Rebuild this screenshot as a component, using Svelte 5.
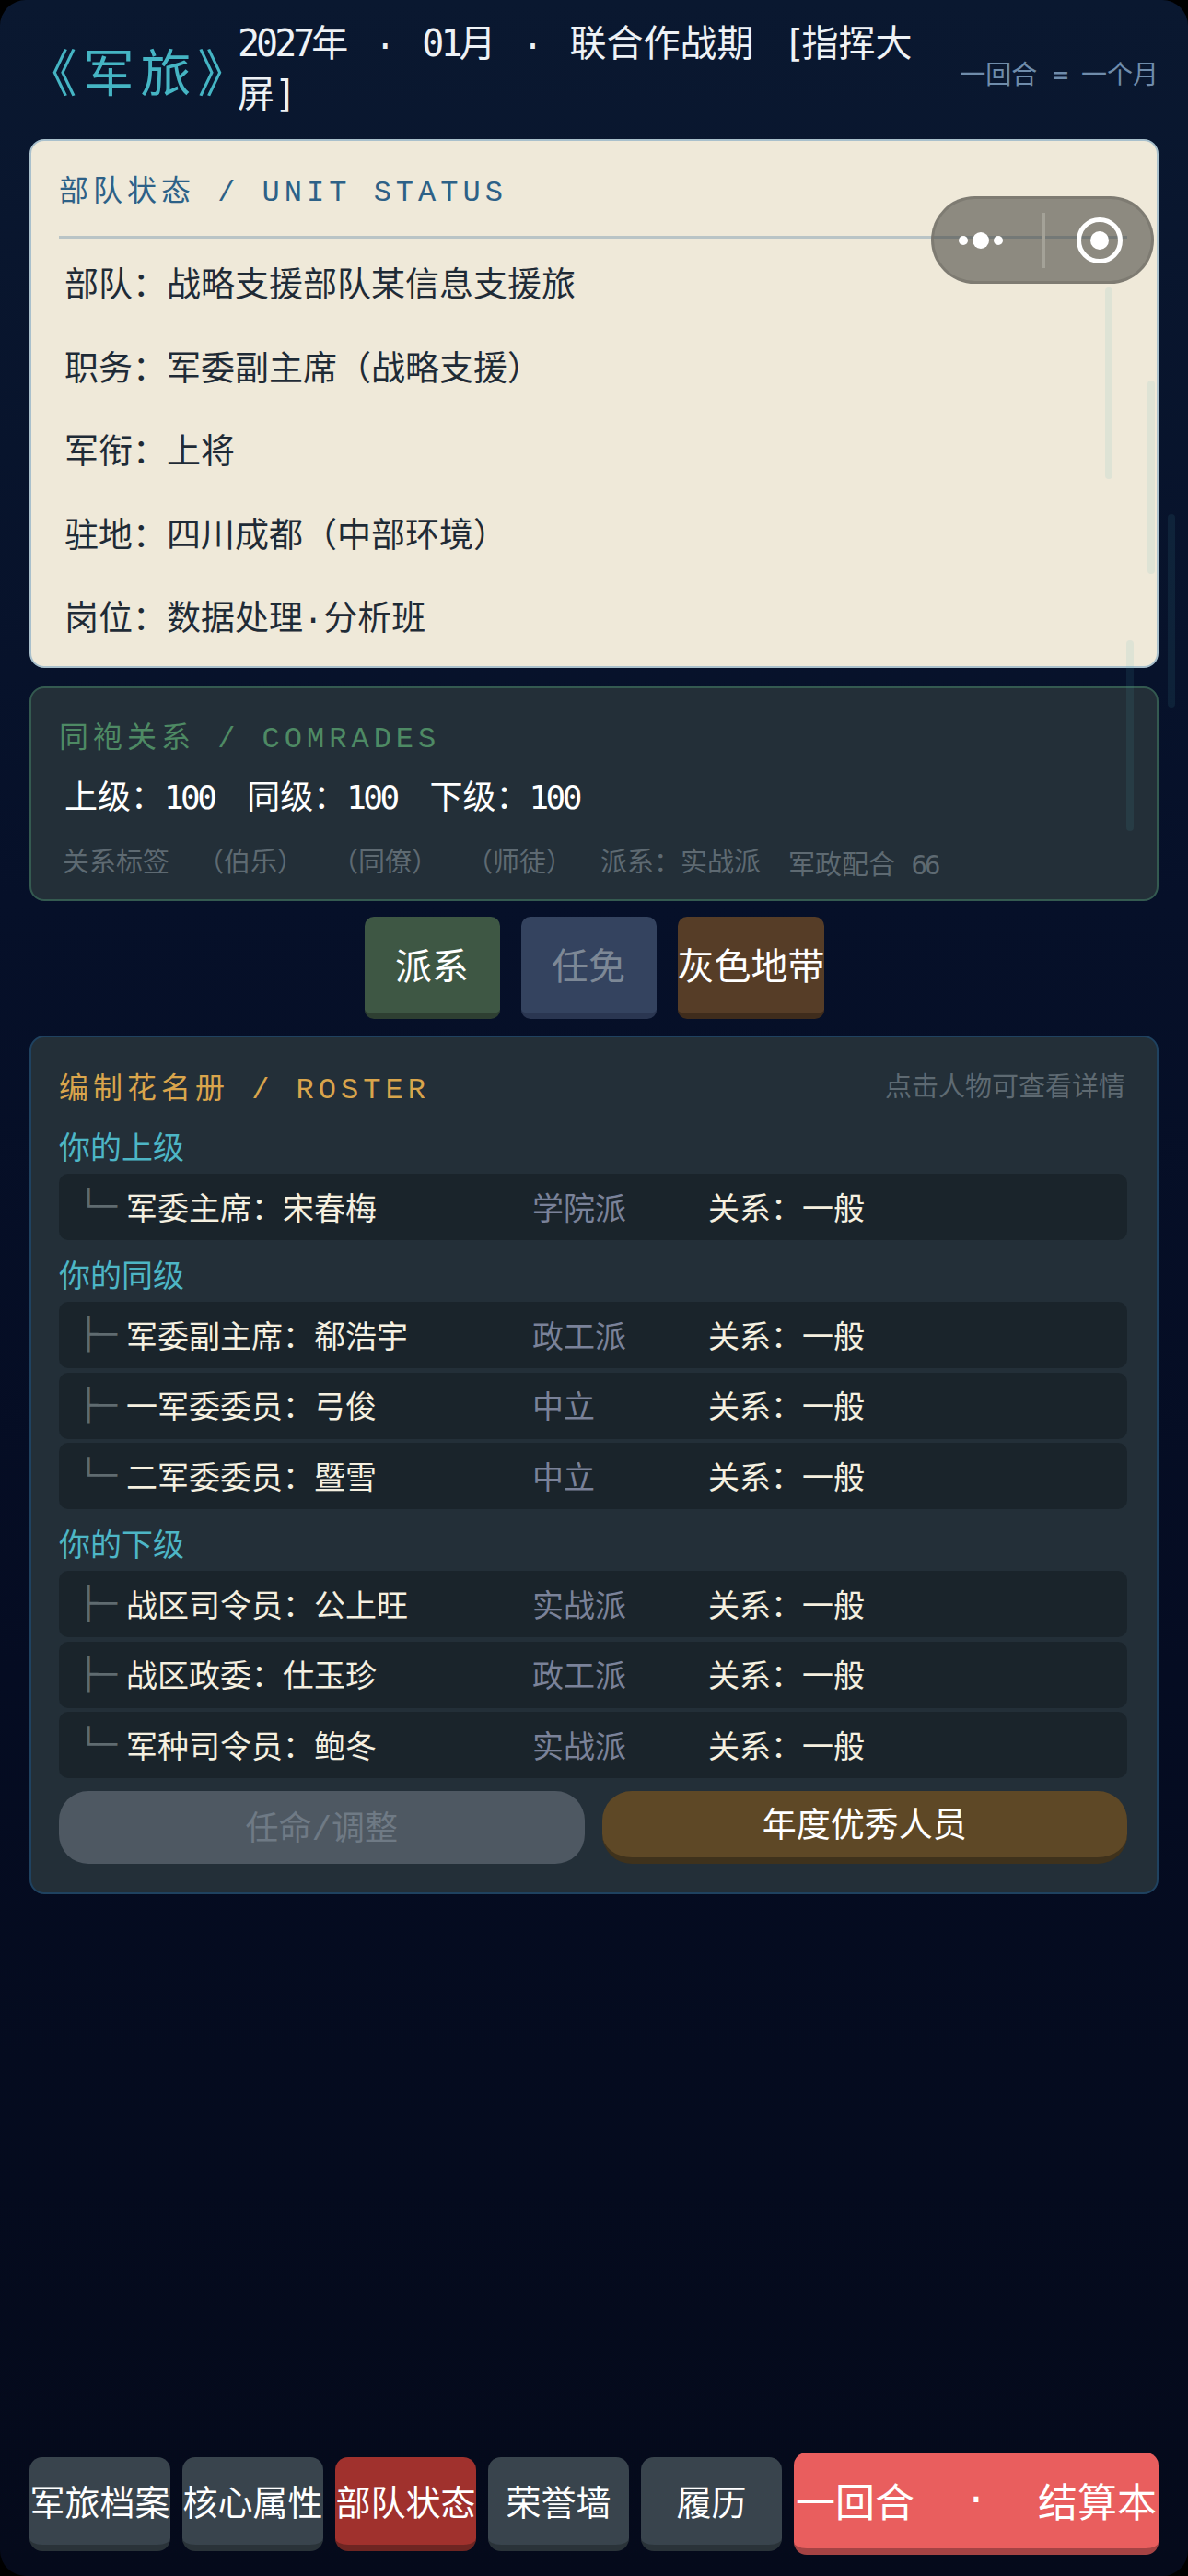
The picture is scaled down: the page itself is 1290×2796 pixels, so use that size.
<script>
  const unitRows = [
    ['部队', '战略支援部队某信息支援旅'],
    ['职务', '军委副主席（战略支援）'],
    ['军衔', '上将'],
    ['驻地', '四川成都（中部环境）'],
    ['岗位', '数据处理·分析班']
  ];

  const groups = [
    {
      label: '你的上级',
      people: [{ tree: '└─', name: '军委主席：宋春梅', faction: '学院派' }]
    },
    {
      label: '你的同级',
      people: [
        { tree: '├─', name: '军委副主席：郗浩宇', faction: '政工派' },
        { tree: '├─', name: '一军委委员：弓俊', faction: '中立' },
        { tree: '└─', name: '二军委委员：暨雪', faction: '中立' }
      ]
    },
    {
      label: '你的下级',
      people: [
        { tree: '├─', name: '战区司令员：公上旺', faction: '实战派' },
        { tree: '├─', name: '战区政委：仕玉珍', faction: '政工派' },
        { tree: '└─', name: '军种司令员：鲍冬', faction: '实战派' }
      ]
    }
  ];

  const tabs = ['军旅档案', '核心属性', '部队状态', '荣誉墙', '履历'];
  const activeTab = '部队状态';
</script>

<div class="screen">
  <span class="streak s1"></span>
  <span class="streak s2"></span>
  <span class="streak s3"></span>
  <span class="streak s4"></span>

  <div class="capsule">
    <span class="dots"><i></i><i class="big"></i><i></i></span>
    <span class="sep"></span>
    <span class="ring"><i></i></span>
  </div>

  <header class="top">
    <h1>《军旅》</h1>
    <div class="period">
      <p><span class="lat">2027</span>年<span class="dot">·</span><span class="lat">01</span>月<span class="dot">·</span>联合作战期 <span class="lat bracket">[</span>指挥大</p>
      <p>屏<span class="lat">]</span></p>
    </div>
    <p class="rule">一回合 <span class="lat">=</span> 一个月</p>
  </header>

  <main class="content">
    <section class="card paper">
      <h2 class="unit-title">部队状态 / UNIT STATUS</h2>
      {#each unitRows as [key, value]}
        <div class="unit-row">{key}：{value}</div>
      {/each}
    </section>

    <section class="card comrades">
      <h2 class="green">同袍关系 / COMRADES</h2>
      <div class="scores">
        <span>上级：<span class="lat">100</span></span>
        <span>同级：<span class="lat">100</span></span>
        <span>下级：<span class="lat">100</span></span>
      </div>
      <div class="tags">
        <span>关系标签</span>
        <span>（伯乐）</span>
        <span>（同僚）</span>
        <span>（师徒）</span>
        <span>派系：实战派</span>
        <span>军政配合 <span class="lat">66</span></span>
      </div>
    </section>

    <div class="actions">
      <button class="act green-btn">派系</button>
      <button class="act blue-btn">任免</button>
      <button class="act brown-btn">灰色地带</button>
    </div>

    <section class="card roster">
      <div class="roster-head">
        <h2 class="gold">编制花名册 / ROSTER</h2>
        <span class="hint">点击人物可查看详情</span>
      </div>
      {#each groups as group}
        <h3>{group.label}</h3>
        <div class="people">
          {#each group.people as p}
            <div class="person">
              <span class="tree">{p.tree}</span>
              <span class="name">{p.name}</span>
              <span class="faction">{p.faction}</span>
              <span class="relation">关系：一般</span>
            </div>
          {/each}
        </div>
      {/each}
      <div class="roster-actions">
        <button class="pill off">任命/调整</button>
        <button class="pill award">年度优秀人员</button>
      </div>
    </section>
  </main>

  <nav class="bottom">
    {#each tabs as tab}
      <button class="tab" class:active={tab === activeTab}>{tab}</button>
    {/each}
    <button class="settle"><span>一回合</span><span>·</span><span>结算本</span></button>
  </nav>
</div>

<style>
  :global(body) {
    margin: 0;
    background: #000;
  }

  .screen {
    position: relative;
    display: flex;
    flex-direction: column;
    height: 2796px;
    overflow: hidden;
    border-radius: 28px;
    background: linear-gradient(180deg, #0a1830 0%, #061029 35%, #050c22 65%, #050a1b 100%);
    font-family: "Liberation Mono", "Noto Sans CJK SC", monospace;
    color: #fff;
  }

  .lat {
    font-family: "DejaVu Sans Mono", monospace;
    letter-spacing: -0.1em;
  }

  .bracket {
    margin-left: 8px;
  }

  .dot {
    display: inline-block;
    width: 80px;
    text-align: center;
  }

  h1, h2, h3, p {
    margin: 0;
    font-weight: 400;
  }

  button {
    padding: 0;
    border: none;
    font: inherit;
    white-space: nowrap;
    overflow: hidden;
  }

  /* header */
  .top {
    display: flex;
    align-items: center;
    height: 151px;
    padding: 0 32px;
    box-sizing: border-box;
  }

  h1 {
    flex: none;
    width: 202px;
    margin-left: 24px;
    font-size: 55px;
    font-feature-settings: "halt";
    letter-spacing: 7px;
    color: #45b5c4;
    white-space: nowrap;
  }

  .period {
    flex: none;
    width: 760px;
    margin-top: -2px;
    font-size: 40px;
    line-height: 55px;
    color: #eef2f6;
    white-space: nowrap;
  }

  .period p {
    height: 55px;
  }

  .rule {
    flex: none;
    margin-left: auto;
    margin-top: 6px;
    font-size: 28px;
    color: #6f8cab;
    white-space: nowrap;
  }

  /* cards */
  .content {
    display: flex;
    flex-direction: column;
    padding: 0 32px;
  }

  .card {
    box-sizing: border-box;
    border: 2px solid;
    border-radius: 16px;
  }

  h2 {
    font-size: 32px;
    line-height: 40px;
    letter-spacing: 5px;
    white-space: nowrap;
  }

  .paper {
    height: 574px;
    padding: 37px 32px 0 30px;
    background: #efe9d9;
    border-color: #a9c0cc;
    color: #1f2b36;
  }

  .unit-title {
    padding-bottom: 26px;
    border-bottom: 3px solid #b9c4c6;
    margin-bottom: 8px;
    color: #2d6187;
  }

  .unit-row {
    padding-left: 6px;
    font-size: 37px;
    line-height: 90.6px;
  }

  .comrades {
    height: 233px;
    margin-top: 20px;
    padding: 36px 32px 0 30px;
    background: #232f38;
    border-color: #345a50;
  }

  .green {
    color: #4e8a64;
  }

  .scores {
    display: flex;
    gap: 36px;
    margin-top: 21px;
    padding-left: 6px;
    font-size: 36px;
    line-height: 44px;
  }

  .tags {
    display: flex;
    gap: 30px;
    margin-top: 30px;
    padding-left: 4px;
    font-size: 29px;
    line-height: 36px;
    color: #5e6a72;
    white-space: nowrap;
  }

  /* action buttons */
  .actions {
    display: flex;
    justify-content: center;
    gap: 23px;
    margin-top: 17px;
  }

  .act {
    box-sizing: border-box;
    width: 147px;
    height: 111px;
    padding-bottom: 3px;
    border-bottom: 6px solid;
    border-radius: 10px;
    font-size: 40px;
    color: #fff;
  }

  .green-btn {
    background: #3e5744;
    border-color: #2e3f32;
  }

  .blue-btn {
    background: #34435f;
    border-color: #2a3651;
    color: #7d8896;
  }

  .brown-btn {
    width: 159px;
    background: #563d27;
    border-color: #3f2c1c;
  }

  /* roster */
  .roster {
    height: 932px;
    margin-top: 18px;
    padding: 38px 32px 0 30px;
    background: #232f38;
    border-color: #1f4260;
  }

  .roster-head {
    display: flex;
    justify-content: space-between;
    align-items: flex-start;
    margin-bottom: 23px;
  }

  .gold {
    color: #d9a54c;
  }

  .hint {
    margin-top: 1px;
    margin-right: 2px;
    font-size: 29px;
    line-height: 36px;
    color: #5e6a72;
  }

  h3 {
    margin-top: 20px;
    margin-bottom: 3px;
    font-size: 34px;
    line-height: 44px;
    color: #4db6c6;
  }

  .roster-head + h3 {
    margin-top: 0;
  }

  .people {
    display: flex;
    flex-direction: column;
    gap: 4.5px;
  }

  .person {
    display: flex;
    align-items: center;
    box-sizing: border-box;
    height: 72px;
    padding-left: 22px;
    padding-bottom: 2px;
    background: #1a242b;
    border-radius: 10px;
    font-size: 34px;
    color: #f5f0e0;
    white-space: nowrap;
  }

  .tree {
    width: 51px;
    font-family: "DejaVu Sans Mono", monospace;
    color: #5f6b70;
  }

  .name {
    width: 441px;
  }

  .faction {
    width: 191px;
    color: #7a8299;
  }

  .roster-actions {
    display: grid;
    grid-template-columns: 1fr 1fr;
    gap: 19px;
    align-items: start;
    margin-top: 14px;
  }

  .pill {
    box-sizing: border-box;
    height: 79px;
    padding-bottom: 5px;
    border-radius: 32px;
    font-size: 36px;
  }

  .off {
    background: #4e5862;
    color: #6f7a85;
  }

  .award {
    background: #5e4826;
    border-bottom: 7px solid #3f321c;
    font-size: 37px;
    color: #fff;
  }

  /* bottom nav */
  .bottom {
    display: flex;
    align-items: center;
    gap: 13px;
    margin-top: auto;
    padding: 0 32px 23px;
  }

  .tab {
    flex: 0 0 153px;
    box-sizing: border-box;
    display: flex;
    justify-content: center;
    align-items: center;
    height: 102px;
    padding-bottom: 2px;
    border-bottom: 7px solid #2a3339;
    border-radius: 14px;
    background: #39444d;
    font-size: 38px;
    color: #fff;
  }

  .tab.active {
    background: #a0312d;
    border-color: #6e2522;
  }

  .settle {
    flex: 1;
    box-sizing: border-box;
    display: flex;
    justify-content: space-between;
    align-items: center;
    height: 111px;
    padding: 0 2px 2px;
    border-bottom: 7px solid #a54344;
    border-radius: 14px;
    background: #e95e5e;
    font-size: 43px;
    color: #fff;
  }

  /* faint falling streaks over the page */
  .streak {
    position: absolute;
    width: 8px;
    border-radius: 4px;
    background: rgba(74, 179, 190, 0.1);
    z-index: 2;
    pointer-events: none;
  }

  .s1 { left: 1200px; top: 312px; height: 208px; }
  .s2 { left: 1246px; top: 413px; height: 210px; }
  .s3 { left: 1268px; top: 558px; height: 210px; }
  .s4 { left: 1223px; top: 695px; height: 207px; }

  /* mini program capsule */
  .capsule {
    position: absolute;
    left: 1011px;
    top: 213px;
    z-index: 3;
    box-sizing: border-box;
    display: flex;
    align-items: center;
    width: 242px;
    height: 95px;
    border: 3px solid rgba(120, 118, 110, 0.75);
    border-radius: 48px;
    background: rgba(60, 60, 55, 0.55);
  }

  .dots {
    position: absolute;
    left: 27px;
    display: flex;
    align-items: center;
    gap: 5px;
  }

  .dots i {
    width: 10px;
    height: 10px;
    border-radius: 50%;
    background: #fff;
  }

  .dots i.big {
    width: 18px;
    height: 18px;
  }

  .sep {
    position: absolute;
    left: 118px;
    top: 15px;
    width: 3px;
    height: 60px;
    background: #a4a298;
  }

  .ring {
    position: absolute;
    left: 155px;
    display: flex;
    align-items: center;
    justify-content: center;
    box-sizing: border-box;
    width: 50px;
    height: 50px;
    border: 5px solid #fff;
    border-radius: 50%;
  }

  .ring i {
    width: 20px;
    height: 20px;
    border-radius: 50%;
    background: #fff;
  }
</style>
